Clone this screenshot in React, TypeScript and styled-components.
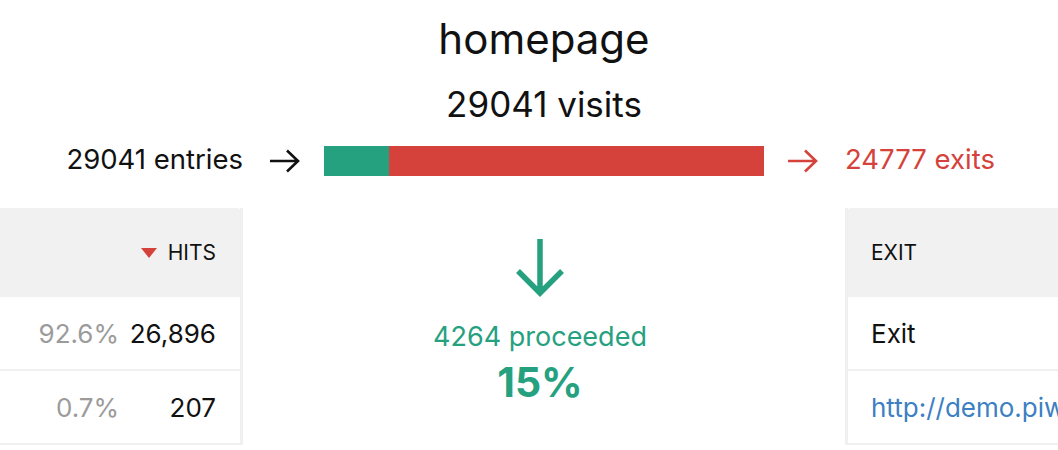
import React from "react";
import styled, { createGlobalStyle } from "styled-components";

const GREEN = "#26a17f";
const RED = "#d5423b";

const GlobalStyle = createGlobalStyle`
  html, body {
    margin: 0;
    padding: 0;
    background: #fff;
    overflow: hidden;
  }
  body {
    font-family: Inter, "Liberation Sans", Arial, sans-serif;
    color: #111;
  }
`;

const Page = styled.div`
  width: 1058px;
  height: 450px;
  overflow: hidden;
`;

const Grid = styled.div`
  display: grid;
  grid-template-columns: 243px 602px 400px;
`;

const Heading = styled.div`
  grid-column: 2;
  display: flex;
  flex-direction: column;
  align-items: center;
  padding: 11px 0 10px;
`;

const Title = styled.h1`
  margin: 0;
  font-size: 42px;
  font-weight: 400;
  line-height: 56px;
`;

const Visits = styled.div`
  font-size: 35px;
  line-height: 44px;
  margin-top: 15px;
`;

const FlowCell = styled.div<{ $align?: "left" | "right"; $color?: string }>`
  display: flex;
  align-items: center;
  justify-content: ${(p) => (p.$align === "right" ? "flex-end" : "flex-start")};
  font-size: 27.5px;
  color: ${(p) => p.$color || "#111"};
  height: 50px;
  padding-bottom: 5px;
  box-sizing: border-box;
  white-space: nowrap;
`;

const FlowMiddle = styled.div`
  display: flex;
  align-items: center;
  justify-content: space-between;
  padding: 0 27px;
  height: 50px;
`;

const Bar = styled.div`
  width: 440px;
  height: 30px;
  display: flex;
`;

const BarPart = styled.div<{ $color: string }>`
  background: ${(p) => p.$color};
  height: 100%;
`;

const Tables = styled(Grid)`
  margin-top: 22px;
`;

const Table = styled.div<{ $side: "left" | "right" }>`
  display: flex;
  flex-direction: column;
  ${(p) => (p.$side === "left" ? "border-right" : "border-left")}: 3px solid #f0f0f0;
`;

const HeadCell = styled.div<{ $side: "left" | "right" }>`
  height: 89px;
  background: #f1f1f1;
  display: flex;
  align-items: center;
  justify-content: ${(p) => (p.$side === "left" ? "flex-end" : "flex-start")};
  padding: ${(p) => (p.$side === "left" ? "0 24px 0 0" : "0 0 0 23px")};
  font-size: 21px;
  text-transform: uppercase;
  border-radius: ${(p) => (p.$side === "left" ? "0 3px 0 0" : "3px 0 0 0")};
`;

const SortIcon = styled.span`
  width: 0;
  height: 0;
  border-left: 8.5px solid transparent;
  border-right: 8.5px solid transparent;
  border-top: 10px solid ${RED};
  margin-right: 11px;
  margin-top: 1px;
`;

const Row = styled.div<{ $side: "left" | "right" }>`
  height: 72px;
  border-bottom: 2px solid #f0f0f0;
  display: flex;
  align-items: center;
  justify-content: ${(p) => (p.$side === "left" ? "flex-end" : "flex-start")};
  padding: ${(p) => (p.$side === "left" ? "0 24px 0 0" : "0 0 0 23px")};
  font-size: 26px;
  white-space: nowrap;
`;

const Percent = styled.span`
  color: #9b9b9b;
`;

const Value = styled.span`
  min-width: 88px;
  text-align: right;
  margin-left: 9px;
`;

const Link = styled.a`
  color: #3c7fc3;
  text-decoration: none;
`;

const Proceeded = styled.div`
  display: flex;
  flex-direction: column;
  align-items: center;
  padding-top: 31px;
  color: ${GREEN};
  margin-right: 8px;
`;

const ProceededText = styled.div`
  font-size: 27px;
  margin-top: 25px;
  line-height: 30px;
`;

const Rate = styled.div`
  font-size: 41px;
  font-weight: 700;
  line-height: 50px;
  margin-top: 5px;
`;

const ArrowRight = ({ color }: { color: string }) => (
  <svg width="30" height="24" viewBox="0 0 30 24" fill="none">
    <path d="M0 12H28M17 1.5L28 12L17 22.5" stroke={color} strokeWidth="2.6" />
  </svg>
);

const ArrowDown = () => (
  <svg width="50" height="58" viewBox="0 0 50 58" fill="none">
    <path d="M25 0V52M3 32L25 54L47 32" stroke={GREEN} strokeWidth="5.5" />
  </svg>
);

const rows = [
  { pct: "92.6%", hits: "26,896", exit: "Exit" },
  { pct: "0.7%", hits: "207", exit: "http://demo.piwik.org/index.php" },
];

export default function App() {
  const proceedRatio = 4264 / 29041;
  return (
    <Page>
      <GlobalStyle />
      <Grid>
        <Heading>
          <Title>homepage</Title>
          <Visits>29041 visits</Visits>
        </Heading>
      </Grid>
      <Grid>
        <FlowCell $align="right">29041 entries</FlowCell>
        <FlowMiddle>
          <ArrowRight color="#111" />
          <Bar>
            <BarPart $color={GREEN} style={{ width: `${proceedRatio * 100}%` }} />
            <BarPart $color={RED} style={{ flex: 1 }} />
          </Bar>
          <ArrowRight color={RED} />
        </FlowMiddle>
        <FlowCell $color={RED}>24777 exits</FlowCell>
      </Grid>
      <Tables>
        <Table $side="left">
          <HeadCell $side="left">
            <SortIcon />
            Hits
          </HeadCell>
          {rows.map((r) => (
            <Row $side="left" key={r.pct}>
              <Percent>{r.pct}</Percent>
              <Value>{r.hits}</Value>
            </Row>
          ))}
        </Table>
        <Proceeded>
          <ArrowDown />
          <ProceededText>4264 proceeded</ProceededText>
          <Rate>15%</Rate>
        </Proceeded>
        <Table $side="right">
          <HeadCell $side="right">Exit</HeadCell>
          {rows.map((r) => (
            <Row $side="right" key={r.exit}>
              {r.exit.startsWith("http") ? <Link href="#">{r.exit}</Link> : r.exit}
            </Row>
          ))}
        </Table>
      </Tables>
    </Page>
  );
}
